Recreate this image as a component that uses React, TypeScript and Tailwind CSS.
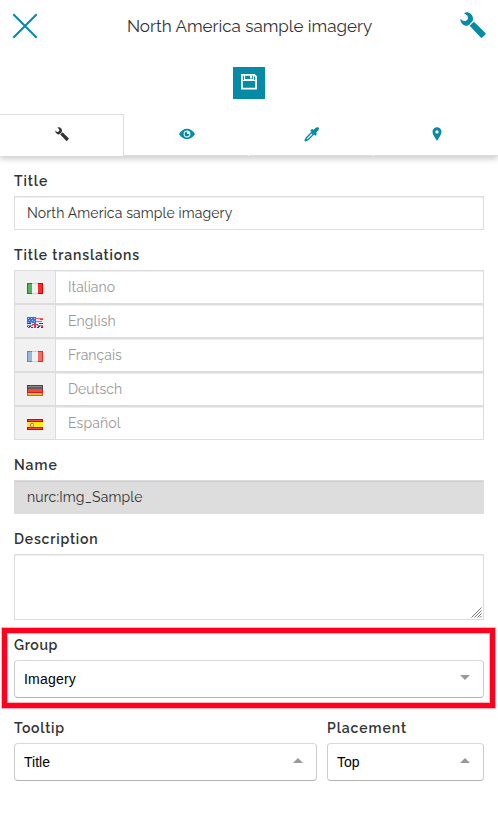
import type { ReactNode } from "react";

const RALE = "font-['Raleway','Lato',sans-serif]";

function Wrench({ className }: { className: string }) {
  return (
    <svg viewBox="0 0 26 26" className={className} fill="currentColor">
      <path d="M4 1.300C5.300 .5 6.600 .2 8 .4C10.900 .9 13 3.600 13 6.700C13 7.700 12.800 8.500 12.400 9.300L9 13C7.900 13.600 6.900 13.800 5.900 13.700C2.700 13.300 .3 10.400 .3 6.700L2.300 8.500L5.300 9.300L7.900 7.300L7.700 3.900Z" />
      <path d="M9.700 13.700L13.900 9.700L25.400 21C25.900 21.500 25.900 22 25.400 22.500L22.300 25.500C21.800 26 21.200 26 20.700 25.500Z" />
    </svg>
  );
}

function Eye() {
  return (
    <svg viewBox="0 0 16 12" className="h-3 w-4" fill="currentColor">
      <path fillRule="evenodd" d="M0 6C2 2.800 4.800 .8 8 .8S14 2.800 16 6C14 9.200 11.200 11.200 8 11.200S2 9.200 0 6ZM8 2.600A3.400 3.400 0 1 0 8 9.400A3.400 3.400 0 1 0 8 2.600Z" />
      <path d="M7.700 3.600L8 6L10.400 6.100A2.450 2.450 0 1 1 7.700 3.600Z" />
    </svg>
  );
}

function Dropper() {
  return (
    <svg viewBox="0 0 15 15" className="size-[15px]" fill="currentColor">
      <path d="M7.300 2.500L8.700 2.300L9.700 2.800L11.500 .9C12.500 -.1 13.900 0 14.500 .6C15.200 1.400 15 2.800 14.100 3.600L12.200 5.400L12.700 6.400L12.500 7.700L11.300 8.800L6.200 3.700Z" />
      <path fillRule="evenodd" d="M7.400 4.800L10.200 7.600L4.500 13.300L2.900 13.700L1.800 14.800L.2 13.200L1.200 12.100L1.700 10.600ZM7.500 6.600L3 11.200L2.700 12.300L3.800 12L8.400 7.500Z" />
    </svg>
  );
}

function Pin() {
  return (
    <svg viewBox="0 0 10 14" className="h-3.5 w-2.5" fill="currentColor">
      <path fillRule="evenodd" d="M5 .2A4.500 4.500 0 0 1 9.500 4.700C9.500 7.500 7.300 10 5 13.900C2.700 10 .5 7.500 .5 4.700A4.500 4.500 0 0 1 5 .2ZM5 3.200A1.700 1.700 0 1 0 5 6.600A1.700 1.700 0 1 0 5 3.200Z" />
    </svg>
  );
}

function Flag({ code }: { code: string }) {
  return (
    <svg viewBox="0 0 16 11" className="mt-[3px] h-[11px] w-4" shapeRendering="crispEdges">
      {code === "it" && (
        <>
          <path fill="#118a1d" d="M0 0h5v11H0z" />
          <path fill="#57b15b" d="M1 1h4v9H1z" />
          <path fill="#d0d0d0" d="M5 0h6v11H5z" />
          <path fill="#f1f1f1" d="M5 1h6v9H5z" />
          <path fill="#e00000" d="M11 0h5v11h-5z" />
          <path fill="#fa2c2c" d="M11 1h4v9h-4z" />
        </>
      )}
      {code === "fr" && (
        <>
          <path fill="#5c87c8" d="M0 0h5v11H0z" />
          <path fill="#97b6df" d="M1 1h4v9H1z" />
          <path fill="#cecece" d="M5 0h6v11H5z" />
          <path fill="#f1f1f1" d="M5 1h6v9H5z" />
          <path fill="#e32d24" d="M11 0h5v11h-5z" />
          <path fill="#ed6f66" d="M11 1h4v9h-4z" />
        </>
      )}
      {code === "de" && (
        <>
          <path fill="#444" d="M0 0h16v4H0z" />
          <path fill="#8a8a8a" d="M1 1h14v1H1z" />
          <path fill="#6a5a5a" d="M1 2h14v2H1z" />
          <path fill="#c9201c" d="M0 4h16v4H0z" />
          <path fill="#f3463f" d="M1 4h14v3H1z" />
          <path fill="#a9790c" d="M0 8h16v3H0z" />
          <path fill="#e7b937" d="M1 8h14v2H1z" />
        </>
      )}
      {code === "es" && (
        <>
          <path fill="#e00000" d="M0 0h16v11H0z" />
          <path fill="#fa4b43" d="M1 1h14v1H1zM1 9h14v1H1z" />
          <path fill="#ffec16" d="M0 3h16v5H0z" />
          <path fill="#f3b53c" d="M3 4h4v4H3z" />
          <path fill="#cf5a4b" d="M4 4h2v1H4zM3 5h1v2H3zM6 6h1v1H6z" />
          <path fill="#efd8c0" d="M4 5h2v2H4z" />
        </>
      )}
      {code === "en" && (
        <>
          <path fill="#e9e9f4" d="M0 0h16v11H0z" />
          <path fill="#3870df" d="M0 0h9v6H0z" />
          <path fill="#a9c9fa" d="M1 1h1v1H1zM4 1h1v1H4zM7 1h1v1H7zM2 3h1v1H2zM5 3h1v1H5zM1 5h1v1H1zM4 5h1v1H4zM7 4h1v1H7z" />
          <path fill="#e76768" d="M9 1h7v1H9zM9 4h6v1H9zM0 8h6v1H0zM10 8h6v1h-6z" />
          <path fill="#d43d4d" d="M13 2h3v1h-3zM7 6h2v5H7zM5 7h6v1H5zM14 9h2v1h-2zM1 10h2v1H1z" />
          <path fill="#293f98" d="M0 6h4v1H0zM0 9h1v1H0zM2 9h2v1H2zM4 10h2v1H4zM10 10h2v1h-2zM11 9h2v1h-2zM12 6h4v1h-4zM14 10h2v1h-2z" />
        </>
      )}
    </svg>
  );
}

function Label({ children, spacing }: { children: ReactNode; spacing: string }) {
  return (
    <div className="mb-[5px] flex h-5 items-center whitespace-nowrap text-sm leading-5 font-semibold text-[#333]">
      <span className={spacing}>{children}</span>
    </div>
  );
}

const FIELD = "border border-[#ddd] shadow-[inset_0_1px_1px_rgba(0,0,0,0.075)]";

function Select({ value, spacing = "", up = false }: { value: string; spacing?: string; up?: boolean }) {
  return (
    <div className="flex h-[38px] items-center justify-between rounded border border-t-[#d9d9d9] border-r-[#ccc] border-b-[#b3b3b3] border-l-[#ccc] bg-white pr-[13px] pl-[9px] font-['Liberation_Sans',Arial,sans-serif] text-sm text-black">
      <span className={spacing}>{value}</span>
      <svg viewBox="0 0 10 5" className="-mt-[3px] h-[5px] w-2.5" fill="#999">
        <path d={up ? "M0 5L5 0L10 5Z" : "M0 0H10L5 5Z"} />
      </svg>
    </div>
  );
}

const LANGUAGES = [
  { code: "it", name: "Italiano", spacing: "tracking-[0.05px]" },
  { code: "en", name: "English", spacing: "tracking-[0.1px]" },
  { code: "fr", name: "Français", spacing: "tracking-[0.05px]" },
  { code: "de", name: "Deutsch", spacing: "tracking-[0.05px]" },
  { code: "es", name: "Español", spacing: "tracking-[0.12px]" },
];

export default function App() {
  return (
    <main className={`relative h-[831px] w-[498px] overflow-hidden bg-white ${RALE}`}>
      <header className="shadow-[0_3px_6px_rgba(0,0,0,0.2)]">
        <div className="flex h-[52px] items-center justify-between px-3 text-[#078aa3]">
          <svg viewBox="0 0 26 26" className="size-[26px]" fill="none" stroke="currentColor" strokeWidth="2.100">
            <path d="M1.300 1.300L24.700 24.700M24.700 1.300L1.300 24.700" />
          </svg>
          <h1 className="mt-0.5 ml-px whitespace-nowrap text-[17px] tracking-[0.01px] text-[#333]">North America sample imagery</h1>
          <Wrench className="mb-0.5 size-[26px]" />
        </div>
        <div className="flex h-[62px] justify-center pt-[15px]">
          <button className="flex size-8 justify-center bg-[#078aa3] pt-[7px] text-white">
            <svg viewBox="0 0 16 16" className="size-4" fill="none" stroke="currentColor" strokeWidth="1.800">
              <path d="M.9 .9H13.300L15.100 2.700V14.600H.9Z" />
              <path d="M3.500 1V5.500H12.500V1M2 6.500H14" strokeWidth="1.200" />
              <path d="M9 1.500H11V4.500H9Z" fill="currentColor" stroke="none" />
            </svg>
          </button>
        </div>
        <nav className="grid h-[42px] grid-cols-[124px_125px_125px_124px] text-[#078aa3]">
          <div className="flex items-center justify-center border-t border-r border-[#ddd] pb-[3px] text-[#333]">
            <Wrench className="size-3.5" />
          </div>
          <div className="mr-px flex items-center justify-center border-b border-[#ddd] pb-px pl-px"><Eye /></div>
          <div className="mr-px flex items-center justify-center border-b border-[#ddd] pb-px pl-px"><Dropper /></div>
          <div className="flex items-center justify-center border-b border-[#ddd] pb-px pl-0.5"><Pin /></div>
        </nav>
      </header>

      <section className="px-3.5 pt-[15px] text-sm text-[#555]">
        <Label spacing="tracking-[0.9px]">Title</Label>
        <div className={`mb-[15px] flex h-[34px] items-center px-3 ${FIELD}`}>
          <span className="tracking-[0.13px] text-[#333]">North America sample imagery</span>
        </div>

        <Label spacing="tracking-[0.84px]">Title translations</Label>
        <div className="mb-[15px]">
          {LANGUAGES.map((l) => (
            <div key={l.code} className="flex h-[34px]">
              <div className="flex w-[42px] items-center justify-center border border-[#ddd] bg-[#f1f1f1]">
                <Flag code={l.code} />
              </div>
              <div className={`-ml-px flex flex-1 items-center px-3 text-[#999] ${FIELD}`}>
                <span className={l.spacing}>{l.name}</span>
              </div>
            </div>
          ))}
        </div>

        <Label spacing="tracking-[0.95px]">Name</Label>
        <div className={`mb-[15px] flex h-[34px] items-center bg-[#ddd] px-3 ${FIELD}`}>
          <span className="tracking-[0.15px] text-[#333]">nurc:Img_Sample</span>
        </div>

        <Label spacing="tracking-[0.79px]">Description</Label>
        <div className={`mb-[15px] flex h-[66px] items-end justify-end ${FIELD}`}>
          <svg viewBox="0 0 11 11" className="mr-px mb-px size-[11px]" stroke="#666" strokeWidth="0.900">
            <path d="M.5 10.500L10.500 .5M3.500 10.500L10.500 3.500M6.500 10.500L10.500 6.500M9 10.500L10.500 9" />
          </svg>
        </div>

        <Label spacing="tracking-[0.6px]">Group</Label>
        <Select value="Imagery" spacing="tracking-[0.2px]" />

        <div className="mt-5 grid grid-cols-[303px_157px] gap-2.5">
          <div>
            <Label spacing="tracking-[0.75px]">Tooltip</Label>
            <Select value="Title" up />
          </div>
          <div>
            <Label spacing="tracking-[0.93px]">Placement</Label>
            <Select value="Top" up />
          </div>
        </div>
      </section>

      <div className="pointer-events-none absolute top-[628px] left-[2px] h-20 w-[493px] border-5 border-[#ff001f] shadow-[0_0_0_1px_#ffb3bc,inset_0_0_0_1px_#ffb3bc]" />
    </main>
  );
}
